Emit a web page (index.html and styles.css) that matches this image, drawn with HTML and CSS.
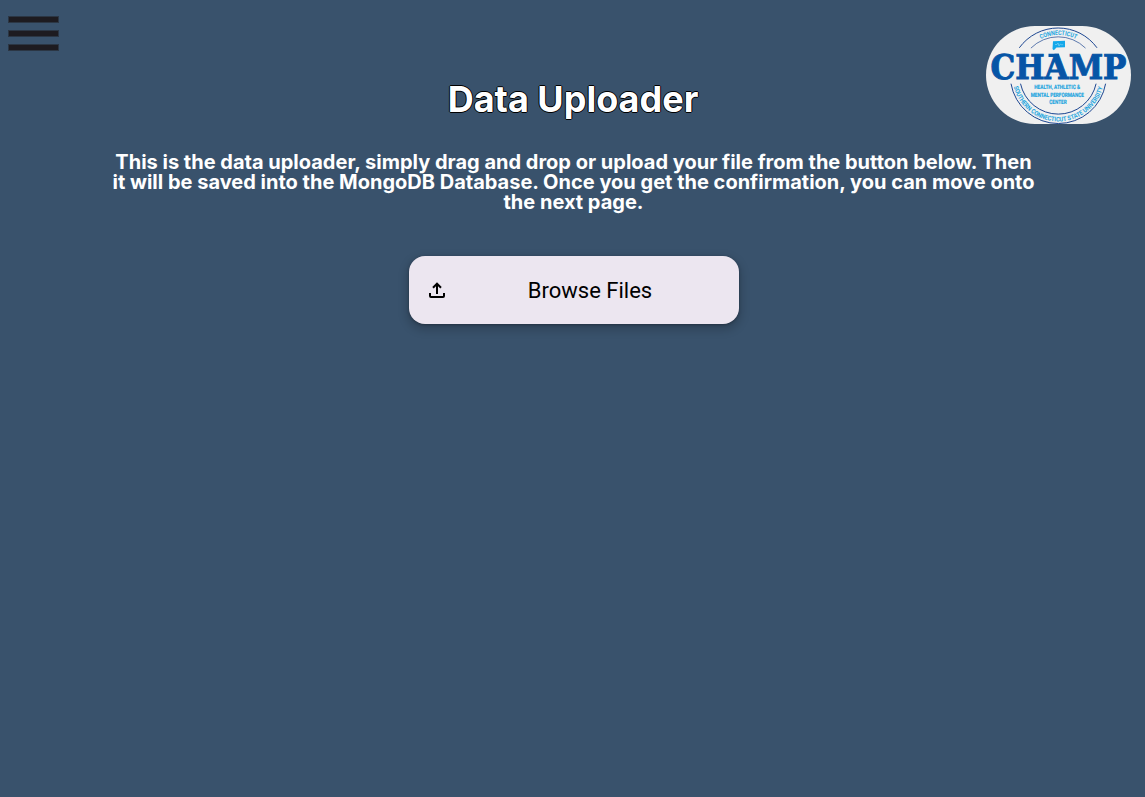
FILE: index.html
```html
<!DOCTYPE html>
<html lang="en">
<head>
<meta charset="utf-8">
<title>Data Uploader</title>
<link rel="stylesheet" href="styles.css">
</head>
<body>
<header class="topbar">
  <button class="menu" aria-label="Menu">
    <span class="bar"></span><span class="bar"></span><span class="bar"></span>
  </button>
  <svg class="logo" viewBox="0 0 145 98" role="img" aria-label="CHAMP">
    <defs>
      <path id="top-text" d="M31.8 49.5A40.5 40.5 0 0 1 112.8 49.5"/>
      <path id="bottom-text" d="M27.7 60.7A46 46 0 0 0 116.9 60.7"/>
    </defs>
    <g class="ring">
      <path d="M33.3 21.8A48 48 0 0 1 111 21.8"/>
      <path class="thin" d="M44.9 22.1A38.7 38.7 0 0 1 99.5 22.1"/>
      <path d="M25 57.7A48 48 0 0 0 119.6 57.7"/>
      <path d="M34.5 57.7A38.7 38.7 0 0 0 110.1 57.7"/>
    </g>
    <path class="state" d="M67 15.3L79 14.8V21.2L70.5 21.6L67.8 24.2L66.5 23Z"/>
    <path class="state-line" d="M69 18.5h2l1-1.5 1 3 1.2-2 1 .7h2"/>
    <path class="apex" d="M62.5 27.8H73V31H62.5Z"/>
    <text class="champ" x="4.5" y="52.6" textLength="136" lengthAdjust="spacingAndGlyphs">CHAMP</text>
    <g class="small">
      <text x="48.3" y="63.2" textLength="45.7" lengthAdjust="spacingAndGlyphs">HEALTH, ATHLETIC &amp;</text>
      <text x="44.7" y="70.5" textLength="53.3" lengthAdjust="spacingAndGlyphs">MENTAL PERFORMANCE</text>
      <text x="63.3" y="77.7" textLength="17.4" lengthAdjust="spacingAndGlyphs">CENTER</text>
    </g>
    <text class="curved"><textPath href="#top-text" startOffset="45.4" textLength="36.5" lengthAdjust="spacingAndGlyphs">CONNECTICUT</textPath></text>
    <text class="curved"><textPath href="#bottom-text" startOffset="0" textLength="121" lengthAdjust="spacingAndGlyphs">SOUTHERN CONNECTICUT STATE UNIVERSITY</textPath></text>
  </svg>
</header>
<main class="content">
  <h1 class="title">Data Uploader</h1>
  <p class="intro">This is the data uploader, simply drag and drop or upload your file from the button below. Then it will be saved into the MongoDB Database. Once you get the confirmation, you can move onto the next page.</p>
  <button class="browse">
    <svg class="upload" viewBox="0 0 16 16" aria-hidden="true"><path d="M8 12V2M4 5.7L8 1.7L12 5.7M1 11V14Q1 15 2 15H14Q15 15 15 14V11"/></svg>
    <span class="browse-label">Browse Files</span>
  </button>
</main>
</body>
</html>
```
FILE: styles.css
```css
* { box-sizing: border-box; }
body {
  margin: 0;
  min-height: 100vh;
  background: #39526c;
  font-family: Inter, "Liberation Sans", sans-serif;
}
button { border: 0; font: inherit; }
.topbar {
  display: flex;
  justify-content: space-between;
  align-items: flex-start;
  height: 77px;
  padding: 16px 14px 0 8px;
}
.menu {
  display: flex;
  flex-direction: column;
  gap: 7px;
  width: 51px;
  padding: 0;
  background: none;
}
.bar {
  height: 7px;
  background: #1d1b20;
  border: 1px solid #2b3644;
}
.logo {
  width: 145px;
  height: 98px;
  margin-top: 10px;
  border-radius: 50px;
  background: #f0f0f0;
  text-rendering: geometricPrecision;
}
.ring { fill: none; stroke: #1c4691; stroke-width: 1; }
.ring .thin { stroke-width: .7; }
.state { fill: #14a8ea; }
.state-line { fill: none; stroke: #8fd6f5; stroke-width: .6; }
.apex { fill: #0655a6; }
.champ {
  font: bold 34px "DejaVu Serif", serif;
  fill: #0655a6;
  stroke: #0655a6;
  stroke-width: 1;
}
.small { font: bold 6px Roboto, sans-serif; fill: #22a5df; stroke: #22a5df; stroke-width: .15; }
.curved { font: bold 6.4px Roboto, sans-serif; fill: #22a5df; }
.content {
  display: flex;
  flex-direction: column;
  align-items: center;
}
.title {
  margin: 0;
  padding-left: 1px;
  font-size: 36px;
  line-height: 44px;
  font-weight: 700;
  color: #fff;
  text-shadow: -1px 0 #000, 0 1px #000, 1px 0 #000, 0 -1px #000;
}
.intro {
  width: 930px;
  margin: 31px 0 44px 2px;
  font-size: 20px;
  line-height: 20px;
  font-weight: 700;
  text-align: center;
  color: #fff;
}
.browse {
  display: flex;
  align-items: center;
  width: 330px;
  height: 68px;
  margin-left: 3px;
  padding: 0 20px;
  border-radius: 16px;
  background: #ece6f0;
  color: #000;
  box-shadow: 0 1px 3px rgba(0,0,0,.3), 0 4px 8px 3px rgba(0,0,0,.15);
}
.upload {
  width: 16px;
  height: 16px;
  fill: none;
  stroke: #000;
  stroke-width: 2;
}
.browse-label {
  flex: 1;
  padding: 2px 0 0 16px;
  font: 22px/28px Roboto, sans-serif;
  text-align: center;
}
```
